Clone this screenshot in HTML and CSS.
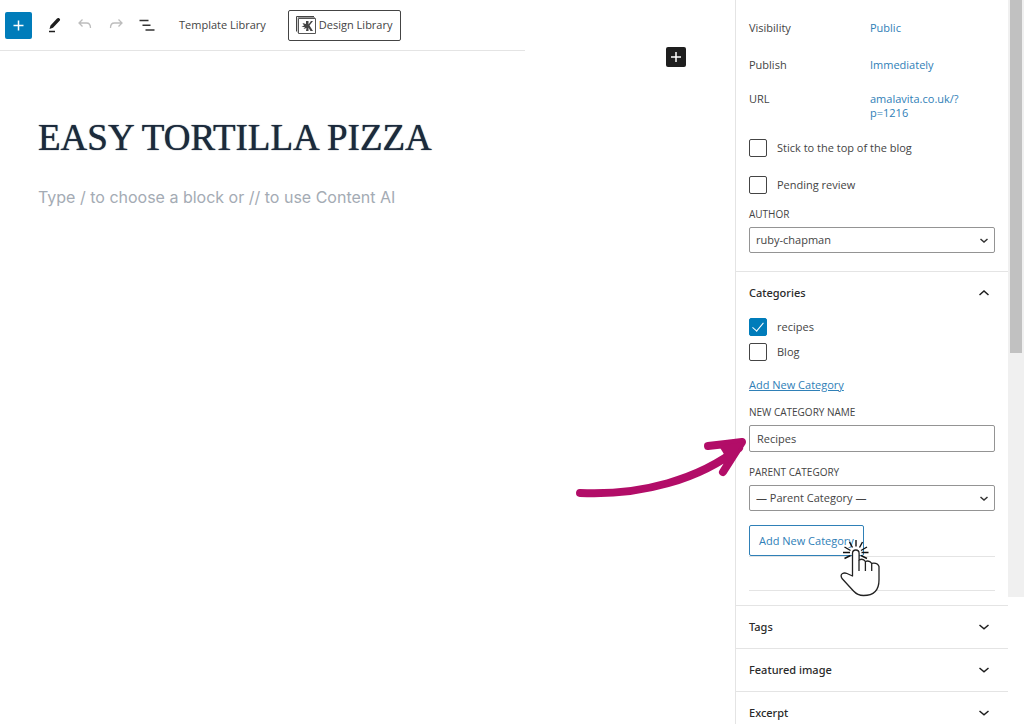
FILE: index.html
```html
<!DOCTYPE html>
<html lang="en">
<head>
<meta charset="utf-8">
<meta name="viewport" content="width=device-width, initial-scale=1">
<title>Easy Tortilla Pizza</title>
<link rel="stylesheet" href="styles.css">
</head>
<body>
<div class="app">
  <main class="editor">
    <section class="editor-main">
      <header class="toolbar">
        <button class="tool tool-add" type="button" aria-label="Add block"><svg viewBox="0 0 27 27" width="27" height="27"><path d="M13.500 8.500v10M8.500 13.500h10" stroke="#fff" stroke-width="1.500"/></svg></button>
        <button class="tool tool-pen" type="button" aria-label="Tools"><svg viewBox="0 0 16 18" width="16" height="18"><path d="M2.500 13l1-3.500L10 2.600c.8-.9 1.700-.8 2.400-.2.900.7.900 1.500.2 2.400L6 11.800z" fill="#1e1e1e"/><path d="M2 15.500h6" stroke="#1e1e1e" stroke-width="1.500"/></svg></button>
        <button class="tool tool-undo" type="button" aria-label="Undo"><svg viewBox="0 0 16 14" width="16" height="14"><path d="M5.500 1.500L2 5l3.500 3.500M2 5h7.500c3 0 4 1.500 4 5" fill="none" stroke="#bdbdbd" stroke-width="1.300"/></svg></button>
        <button class="tool tool-redo" type="button" aria-label="Redo"><svg viewBox="0 0 16 14" width="16" height="14"><path d="M10.500 1.500L14 5l-3.500 3.500M14 5H6.500c-3 0-4 1.500-4 5" fill="none" stroke="#bdbdbd" stroke-width="1.300"/></svg></button>
        <button class="tool tool-list" type="button" aria-label="List view"><svg viewBox="0 0 18 14" width="18" height="14"><path d="M1.500 2.500h9M4.500 7.200h8M7.500 12h9" stroke="#333" stroke-width="1.500"/></svg></button>
        <button class="tool tool-template" type="button">Template Library</button>
        <button class="tool tool-design" type="button"><svg viewBox="0 0 20 18" width="20" height="18"><path d="M.5 15.500V.5H18" fill="none" stroke="#444"/><path d="M2 17V1.500h17" fill="none" stroke="#999"/><path d="M2.500 2.500h17v15h-17z" fill="#fff" stroke="#555"/><path d="M10 5h2.500v3.500L15 5h2l-3.500 4.500L17 15h-2.500l-2-3.500V15H10l.5-3-3 1 1.500-2H5.500L8 9.500 6.500 7l3.500 1z" fill="#444"/></svg>Design Library</button>
      </header>
      <article class="post">
        <h1 class="post-title">EASY TORTILLA PIZZA</h1>
        <p class="post-prompt">Type / to choose a block or // to use Content AI</p>
      </article>
    </section>
    <div class="inserter"><button class="tool tool-insert" type="button" aria-label="Insert block"><svg viewBox="0 0 20 20" width="20" height="20"><path d="M10 5v10M5 10h10" stroke="#fff" stroke-width="1.500"/></svg></button></div>
  </main>
  <aside class="sidebar">
    <section class="panel summary">
      <div class="row"><span>Visibility</span><a href="#visibility">Public</a></div>
      <div class="row"><span>Publish</span><a href="#publish">Immediately</a></div>
      <div class="row row-url"><span>URL</span><a href="#url">amalavita.co.uk/?<br>p=1216</a></div>
      <label class="check"><input type="checkbox">Stick to the top of the blog</label>
      <label class="check"><input type="checkbox">Pending review</label>
      <label class="caption" for="author">AUTHOR</label>
      <div class="select">
        <select id="author"><option>ruby-chapman</option></select>
        <svg class="select-arrow" viewBox="0 0 10 6" width="10" height="6"><path d="M1.500 1l3.500 3 3.500-3" fill="none" stroke="#333" stroke-width="1.500"/></svg>
      </div>
    </section>
    <section class="panel categories">
      <h2 class="panel-title"><button class="panel-toggle" type="button">Categories<svg viewBox="0 0 12 8" width="12" height="8"><path d="M1.500 6L6 2l4.500 4" fill="none" stroke="#1e1e1e" stroke-width="1.500"/></svg></button></h2>
      <div class="category-list">
        <label class="check"><input type="checkbox" checked>recipes</label>
        <label class="check"><input type="checkbox">Blog</label>
      </div>
      <a class="add-link" href="#add">Add New Category</a>
      <label class="caption" for="name">NEW CATEGORY NAME</label>
      <div class="name-field">
        <input id="name" class="text" type="text" value="Recipes">
        <svg class="arrow" viewBox="0 0 172 64" width="172" height="64" aria-hidden="true"><path d="M3 57C64 60 123 43 162 12M131 10Q149 8 165 6Q156 20 146 36" fill="none" stroke="#b20d68" stroke-width="8" stroke-linecap="round" stroke-linejoin="round"/><path d="M142 10l24-4-13 22z" fill="#b20d68"/></svg>
      </div>
      <label class="caption" for="parent">PARENT CATEGORY</label>
      <div class="select">
        <select id="parent"><option>— Parent Category —</option></select>
        <svg class="select-arrow" viewBox="0 0 10 6" width="10" height="6"><path d="M1.500 1l3.500 3 3.500-3" fill="none" stroke="#333" stroke-width="1.500"/></svg>
      </div>
      <div class="submit">
        <button class="add-button" type="button">Add New Category<svg class="hand" viewBox="0 0 40 58" width="40" height="58" aria-hidden="true"><path d="M12.500 37V14.500q0-3.500 3.300-3.500t3.300 3.500V21q4-2 6.300 1.500 4-1.500 6.300 1.800 6-1 7.300 3.200V41q0 15.500-15.500 15.500-6 0-10-4.500L2 39.500Q0 36 2.500 34.500q2-1 4.500 0z" fill="#fff" stroke="#222" stroke-width="1.300" stroke-linejoin="round"/><path d="M19 21v11M25.400 22.500V32M31.700 24.300V32" fill="none" stroke="#222" stroke-width="1.300"/><path d="M16 1v6.500M9.500 3l3 5.500M22.500 3l-3 5.500M4.500 8l6 3.500M27 8l-6 3.500M3 13.500h7M21.500 13.500h7M4.500 19.500l6-3M27 19.500l-6-3" stroke="#111" stroke-width="1.400"/></svg></button>
      </div>
      <div class="divider"></div>
    </section>
    <section class="panel"><h2 class="panel-title"><button class="panel-toggle" type="button">Tags<svg viewBox="0 0 12 8" width="12" height="8"><path d="M1.500 2L6 5.800 10.500 2" fill="none" stroke="#1e1e1e" stroke-width="1.500"/></svg></button></h2></section>
    <section class="panel"><h2 class="panel-title"><button class="panel-toggle" type="button">Featured image<svg viewBox="0 0 12 8" width="12" height="8"><path d="M1.500 2L6 5.800 10.500 2" fill="none" stroke="#1e1e1e" stroke-width="1.500"/></svg></button></h2></section>
    <section class="panel"><h2 class="panel-title"><button class="panel-toggle" type="button">Excerpt<svg viewBox="0 0 12 8" width="12" height="8"><path d="M1.500 2L6 5.800 10.500 2" fill="none" stroke="#1e1e1e" stroke-width="1.500"/></svg></button></h2></section>
  </aside>
  <div class="scroll-track"><div class="scroll-thumb"></div></div>
</div>
</body>
</html>
```
FILE: styles.css
```css
* { box-sizing: border-box; }
body {
  margin: 0;
  background: #fff;
  color: #444;
  font: 11px/14px "Open Sans", "Noto Sans", sans-serif;
}
button, input, select { font: inherit; color: inherit; }
button { background: none; border: 0; padding: 0; }
svg { display: block; flex: none; }
a { color: #2f80b7; text-decoration: none; }

.app { display: flex; height: 100vh; overflow: hidden; }

/* editor */
.editor { flex: 1; display: grid; grid-template-columns: 5fr 2fr; min-width: 0; }
.editor-main { min-width: 0; }
.inserter { padding: 47px 49px 0 0; }
.toolbar {
  display: flex;
  align-items: center;
  height: 51px;
  padding-left: 5px;
  border-bottom: 1px solid #e4e4e4;
  white-space: nowrap;
}
.tool { display: flex; align-items: center; }
.tool-add { background: #007cba; border-radius: 2px; }
.tool-pen { margin-left: 15px; }
.tool-undo { margin-left: 14px; }
.tool-redo { margin-left: 15px; }
.tool-list { margin-left: 14px; }
.tool-template { margin-left: 23px; }
.tool-design {
  gap: 3px;
  height: 31px;
  margin-left: 22px;
  padding: 0 8px 0 7px;
  border: 1px solid #444;
  border-radius: 2px;
}
.tool-insert { margin-left: auto; background: #1e1e1e; border-radius: 2px; }
.post { padding: 65px 38px; }
.post-title {
  margin: 0;
  color: #1b2a3c;
  font: 400 37px/44px "Liberation Serif", serif;
  text-shadow: 0 0 1px #1b2a3c;
  white-space: nowrap;
}
.post-prompt {
  margin: 27px 0 0;
  color: #a4abb4;
  font: 16px/20px Inter, sans-serif;
  white-space: nowrap;
}

/* settings sidebar */
.sidebar { flex: none; width: 273px; border-left: 1px solid #e4e4e4; }
.panel { padding: 0 13px; border-bottom: 1px solid #e4e4e4; }
.summary { padding-top: 9px; padding-bottom: 18px; }
.row {
  display: grid;
  grid-template-columns: 121px 1fr;
  align-items: center;
  height: 37px;
}
.row-url { height: auto; margin: 9px 0 19px; align-items: start; }
.check { display: flex; align-items: center; gap: 10px; height: 18px; }
.summary .check { margin-bottom: 19px; }
.summary .check + .check { margin-bottom: 13px; }
.check input {
  appearance: none;
  display: grid;
  place-items: center;
  width: 18px;
  height: 18px;
  margin: 0;
  border: 1px solid #444;
  border-radius: 2px;
}
.check input:checked { background: #007cba; border-color: #007cba; }
.check input:checked::after {
  content: "";
  width: 5px;
  height: 10px;
  margin-bottom: 3px;
  border: solid #fff;
  border-width: 0 1px 1px 0;
  transform: rotate(40deg);
}
.caption { display: block; margin-bottom: 6px; font-size: 10px; line-height: 14px; }
.select { position: relative; }
.select select {
  appearance: none;
  display: block;
  width: 100%;
  height: 26px;
  padding: 0 24px 0 6px;
  border: 1px solid #949494;
  border-radius: 2px;
  background: #fff;
}
.select-arrow { position: absolute; right: 6px; top: 11px; pointer-events: none; }

.panel-title { margin: 0; font: inherit; }
.panel-toggle {
  display: flex;
  align-items: center;
  justify-content: space-between;
  width: 100%;
  height: 42px;
  padding-right: 5px;
  color: #2a2a2a;
  font-family: "Noto Sans", sans-serif;
  font-weight: 500;
}
.category-list { display: grid; gap: 7px; margin: 4px 0 17px; }
.add-link { display: block; margin-bottom: 13px; text-decoration: underline; }
.name-field { position: relative; margin-bottom: 13px; }
.text {
  display: block;
  width: 100%;
  height: 27px;
  padding: 0 7px;
  border: 1px solid #949494;
  border-radius: 2px;
}
.arrow { position: absolute; right: 100%; top: 11px; overflow: visible; }
.submit { padding-top: 14px; border-bottom: 1px solid #e4e4e4; }
.add-button {
  position: relative;
  height: 31px;
  padding: 0 9px;
  border: 1px solid #2f80b7;
  border-radius: 2px;
  color: #2f80b7;
  display: block;
}
.hand { position: absolute; left: 90px; top: 13px; }
.divider { height: 34px; margin-bottom: 14px; border-bottom: 1px solid #e4e4e4; }

.scroll-track { flex: none; width: 16px; height: 597px; padding: 0 2px; background: #f0f0f0; }
.scroll-thumb { height: 353px; background: #c1c1c1; }
```
